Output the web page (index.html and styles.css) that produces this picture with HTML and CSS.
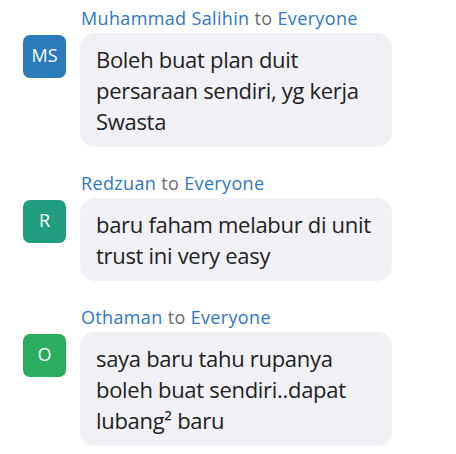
FILE: index.html
```html
<!DOCTYPE html>
<html lang="en">
<head>
    <meta charset="UTF-8">
    <meta name="viewport" content="width=device-width, initial-scale=1.0">
    <title>Chat</title>
    <link rel="stylesheet" href="styles.css">
</head>
<body>
    <div class="chat">
        <div class="msg">
            <div class="msg-head"><span class="who">Muhammad Salihin</span> to <span class="who">Everyone</span></div>
            <div class="avatar blue">MS</div>
            <div class="bubble">Boleh buat plan duit persaraan sendiri, yg kerja Swasta</div>
        </div>
        <div class="msg">
            <div class="msg-head"><span class="who">Redzuan</span> to <span class="who">Everyone</span></div>
            <div class="avatar teal">R</div>
            <div class="bubble">baru faham melabur di unit trust ini very easy</div>
        </div>
        <div class="msg">
            <div class="msg-head"><span class="who">Othaman</span> to <span class="who">Everyone</span></div>
            <div class="avatar green">O</div>
            <div class="bubble">saya baru tahu rupanya boleh buat sendiri..dapat lubang² baru</div>
        </div>
    </div>
</body>
</html>
```

FILE: styles.css
```css
body {
    margin: 0;
    background-color: #ffffff;
    font-family: "Open Sans", "Noto Sans", sans-serif;
}
.chat {
    padding: 7px 0 0 23px;
}
.msg {
    display: grid;
    grid-template-columns: 43px 312px;
    column-gap: 14px;
    margin-bottom: 25px;
}
.msg-head {
    grid-column: 2;
    font-size: 18px;
    letter-spacing: 0.35px;
    line-height: 22px;
    color: #6b6b6b;
    margin-bottom: 4px;
    padding-left: 1px;
}
.msg-head .who {
    color: #2f77c1;
}
.avatar {
    grid-column: 1;
    width: 43px;
    height: 43px;
    margin-top: 2px;
    border-radius: 7px;
    color: #ffffff;
    font-size: 18px;
    line-height: 40px;
    text-align: center;
}
.avatar.blue {
    background-color: #2b7bba;
}
.avatar.teal {
    background-color: #209e7f;
}
.avatar.green {
    background-color: #2aad5f;
}
.bubble {
    grid-column: 2;
    background-color: #f1f1f5;
    border-radius: 15px;
    padding: 11px 12px 10px 16px;
    font-size: 22px;
    letter-spacing: -0.3px;
    line-height: 31px;
    color: #222222;
}
```
